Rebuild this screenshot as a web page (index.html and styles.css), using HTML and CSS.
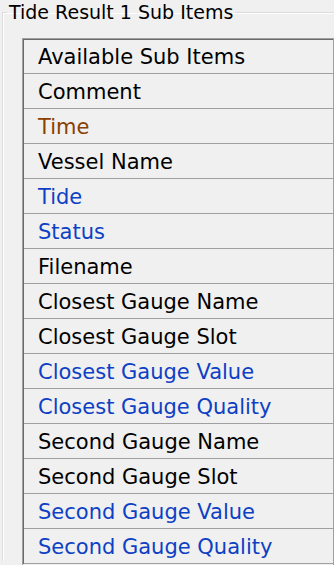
FILE: index.html
```html
<!DOCTYPE html>
<html>
<head>
  <title>Tide Result 1 Sub Items</title>
  <link rel="stylesheet" href="styles.css">
</head>
<body>
  <fieldset class="group">
    <legend>Tide Result 1 Sub Items</legend>
    <div class="list">
      <div class="list-inner">
        <div class="row header">Available Sub Items</div>
        <div class="row">Comment</div>
        <div class="row time">Time</div>
        <div class="row">Vessel Name</div>
        <div class="row blue">Tide</div>
        <div class="row blue">Status</div>
        <div class="row">Filename</div>
        <div class="row">Closest Gauge Name</div>
        <div class="row">Closest Gauge Slot</div>
        <div class="row blue">Closest Gauge Value</div>
        <div class="row blue">Closest Gauge Quality</div>
        <div class="row">Second Gauge Name</div>
        <div class="row">Second Gauge Slot</div>
        <div class="row blue">Second Gauge Value</div>
        <div class="row blue">Second Gauge Quality</div>
      </div>
    </div>
  </fieldset>
</body>
</html>
```

FILE: styles.css
```css
html, body {
  margin: 0;
  padding: 0;
  background-color: #f0f0f0;
  overflow: hidden;
}

body {
  font-family: "DejaVu Sans", sans-serif;
  color: #000;
  width: 334px;
  height: 565px;
}

.group {
  margin: 1px 0 0 2px;
  padding: 0 0 0 19px;
  border: 1px solid #dcdcdc;
  border-right: none;
  border-bottom: none;
  box-shadow: inset 1px 1px 0 #fff;
  min-width: 0;
  height: 560px;
  box-sizing: border-box;
}

.group legend {
  font-size: 19px;
  padding: 0 2px;
  margin-left: -15px;
  line-height: 22px;
}

.list {
  margin-top: 15px;
  border: 1px solid #a0a0a0;
  border-bottom: none;
  height: 526px;
  overflow: hidden;
  font-size: 21px;
}

.list-inner {
  border-top: 1px solid #696969;
  border-left: 1px solid #696969;
}

.row {
  height: 34px;
  line-height: 36px;
  padding-left: 14px;
  border-bottom: 1px solid #a0a0a0;
  white-space: nowrap;
}

.row.header {
  height: 33px;
  line-height: 35px;
}

.time {
  color: #8b4000;
}

.blue {
  color: #0d40c4;
}
```
